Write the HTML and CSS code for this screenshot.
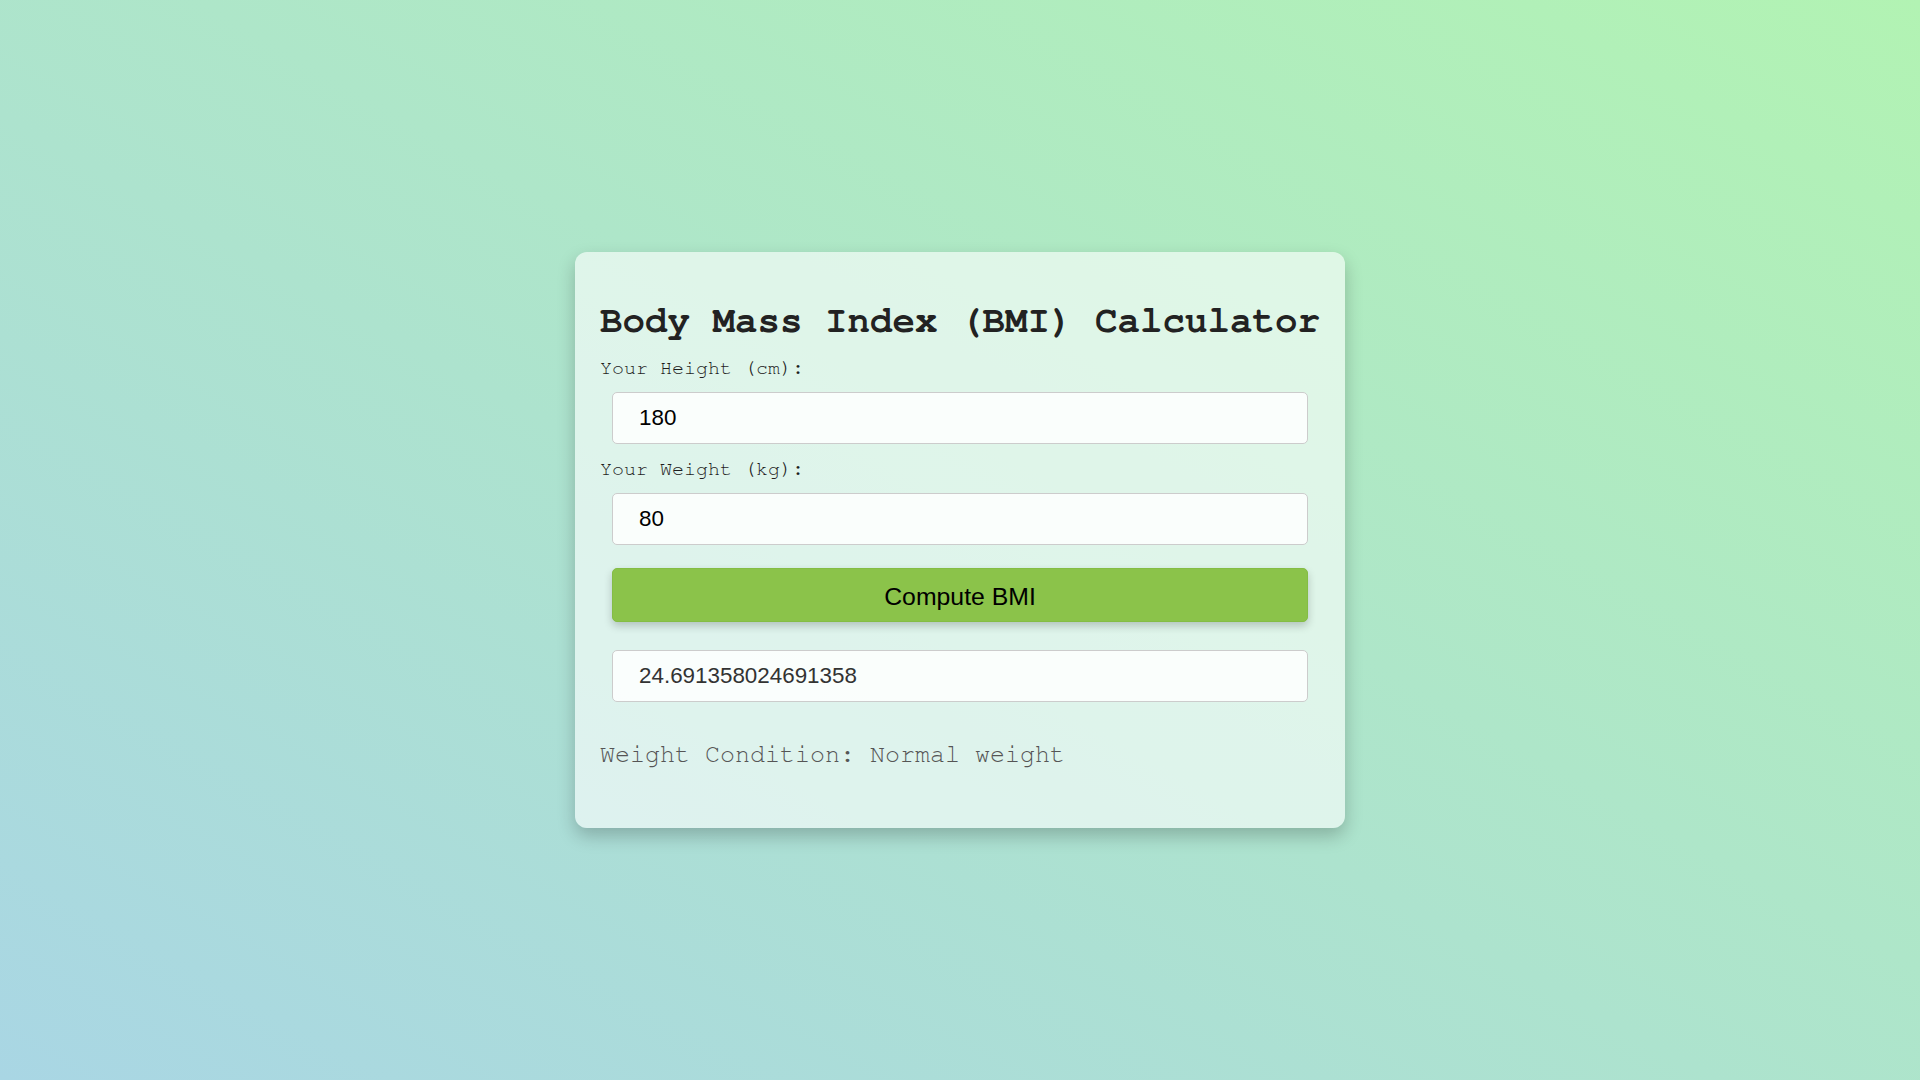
FILE: index.html
```html
<!DOCTYPE html>
<html lang="en">
<head>
<meta charset="UTF-8">
<title>BMI Calculator</title>
<link rel="stylesheet" href="styles.css">
</head>
<body>
  <main class="card">
    <h1 class="title">Body Mass Index (BMI) Calculator</h1>
    <label class="label label-first" for="height">Your Height (cm):</label>
    <input class="field field-first" id="height" type="text" value="180">
    <label class="label label-second" for="weight">Your Weight (kg):</label>
    <input class="field field-second" id="weight" type="text" value="80">
    <button class="btn" type="button">Compute BMI</button>
    <input class="field result" type="text" value="24.691358024691358" readonly>
    <p class="condition">Weight Condition: Normal weight</p>
  </main>
</body>
</html>
```
FILE: styles.css
```css
* { box-sizing: border-box; }

html, body {
  margin: 0;
  padding: 0;
}

body {
  min-height: 100vh;
  display: flex;
  align-items: center;
  justify-content: center;
  background: linear-gradient(to top right, #a9d6e4, #b2f3b3);
  font-family: "Nimbus Mono PS", "FreeMono", "Courier New", "Liberation Mono", monospace;
}

.card {
  width: 770px;
  height: 576px;
  display: flex;
  flex-direction: column;
  padding: 25px 25px 0;
  background: rgba(255, 255, 255, 0.6);
  border-radius: 12px;
  box-shadow: 0 8px 18px rgba(0, 0, 0, 0.22);
}

.title {
  margin: 23px 0 0;
  font-size: 37.5px;
  line-height: 42px;
  font-weight: bold;
  color: #222;
  white-space: nowrap;
}

.label {
  display: block;
  font-size: 20px;
  line-height: 23px;
  color: #1e1e1e;
}
.label-first { margin-top: 15px; }
.label-second { margin-top: 14px; }

.field {
  display: block;
  height: 52px;
  margin: 12px 12px 0;
  padding: 0 24px 0 26px;
  border: 1px solid #cccccc;
  border-radius: 5px;
  background: rgba(255, 255, 255, 0.85);
  font-family: "Liberation Sans", Arial, sans-serif;
  font-size: 22.4px;
  color: #000;
  outline: none;
}

.result {
  margin-top: 28px;
  color: #333;
}

.btn {
  display: block;
  height: 54px;
  margin: 23px 12px 0;
  padding: 3px 0 0;
  border: 1px solid #84bd44;
  border-radius: 5px;
  background: #8bc34a;
  font-family: "Liberation Sans", Arial, sans-serif;
  font-size: 24.8px;
  color: #000;
  box-shadow: 0 4px 8px rgba(0, 0, 0, 0.2);
  cursor: pointer;
}

.condition {
  margin: 39px 0 0;
  font-size: 25px;
  line-height: 28px;
  color: #555;
}
```
